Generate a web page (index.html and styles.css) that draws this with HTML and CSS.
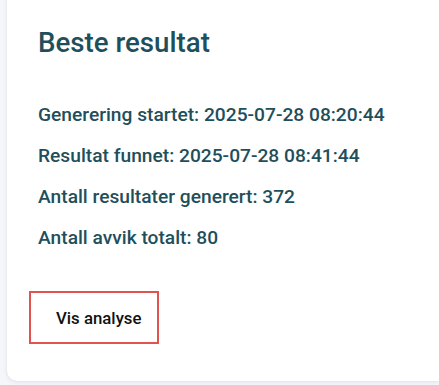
FILE: index.html
```html
<!DOCTYPE html>
<html lang="no">
<head>
<meta charset="utf-8">
<title>Beste resultat</title>
<link rel="stylesheet" href="styles.css">
</head>
<body>
<div class="card">
  <h1 class="title">Beste resultat</h1>
  <div class="stats">
    <p class="stat">Generering startet: 2025-07-28 08:20:44</p>
    <p class="stat">Resultat funnet: 2025-07-28 08:41:44</p>
    <p class="stat">Antall resultater generert: 372</p>
    <p class="stat">Antall avvik totalt: 80</p>
  </div>
  <button class="btn" type="button">Vis analyse</button>
</div>
</body>
</html>
```
FILE: styles.css
```css
html, body {
  margin: 0;
  padding: 0;
  overflow: hidden;
}
body {
  background: #f5f6fa;
  font-family: Roboto, "Liberation Sans", sans-serif;
  height: 385px;
  padding-top: 1px;
  box-sizing: border-box;
}
.card {
  margin: -21px 0 0 7px;
  padding: 46px 0 37px 31px;
  background: #ffffff;
  border-radius: 0 0 0 10px;
  box-shadow: 0 1px 4px rgba(40, 50, 80, 0.10), 0 0 1px rgba(40, 50, 80, 0.08);
}
.title {
  margin: 0;
  font-size: 27.7px;
  font-weight: 500;
  line-height: 34px;
  color: #1f4f5b;
}
.stats {
  display: flex;
  flex-direction: column;
  gap: 17px;
  margin-top: 43px;
}
.stat {
  margin: 0;
  font-size: 19.2px;
  font-weight: 500;
  line-height: 24px;
  color: #1f4f5b;
}
.btn {
  display: flex;
  align-items: center;
  box-sizing: border-box;
  width: 130px;
  height: 53px;
  margin: 41px 0 0 -9px;
  padding: 0 0 0 25px;
  background: #ffffff;
  border: 2px solid #e2524f;
  border-radius: 0;
  font-family: Roboto, "Liberation Sans", sans-serif;
  font-size: 16.8px;
  font-weight: 500;
  color: #111111;
  cursor: pointer;
}
```
